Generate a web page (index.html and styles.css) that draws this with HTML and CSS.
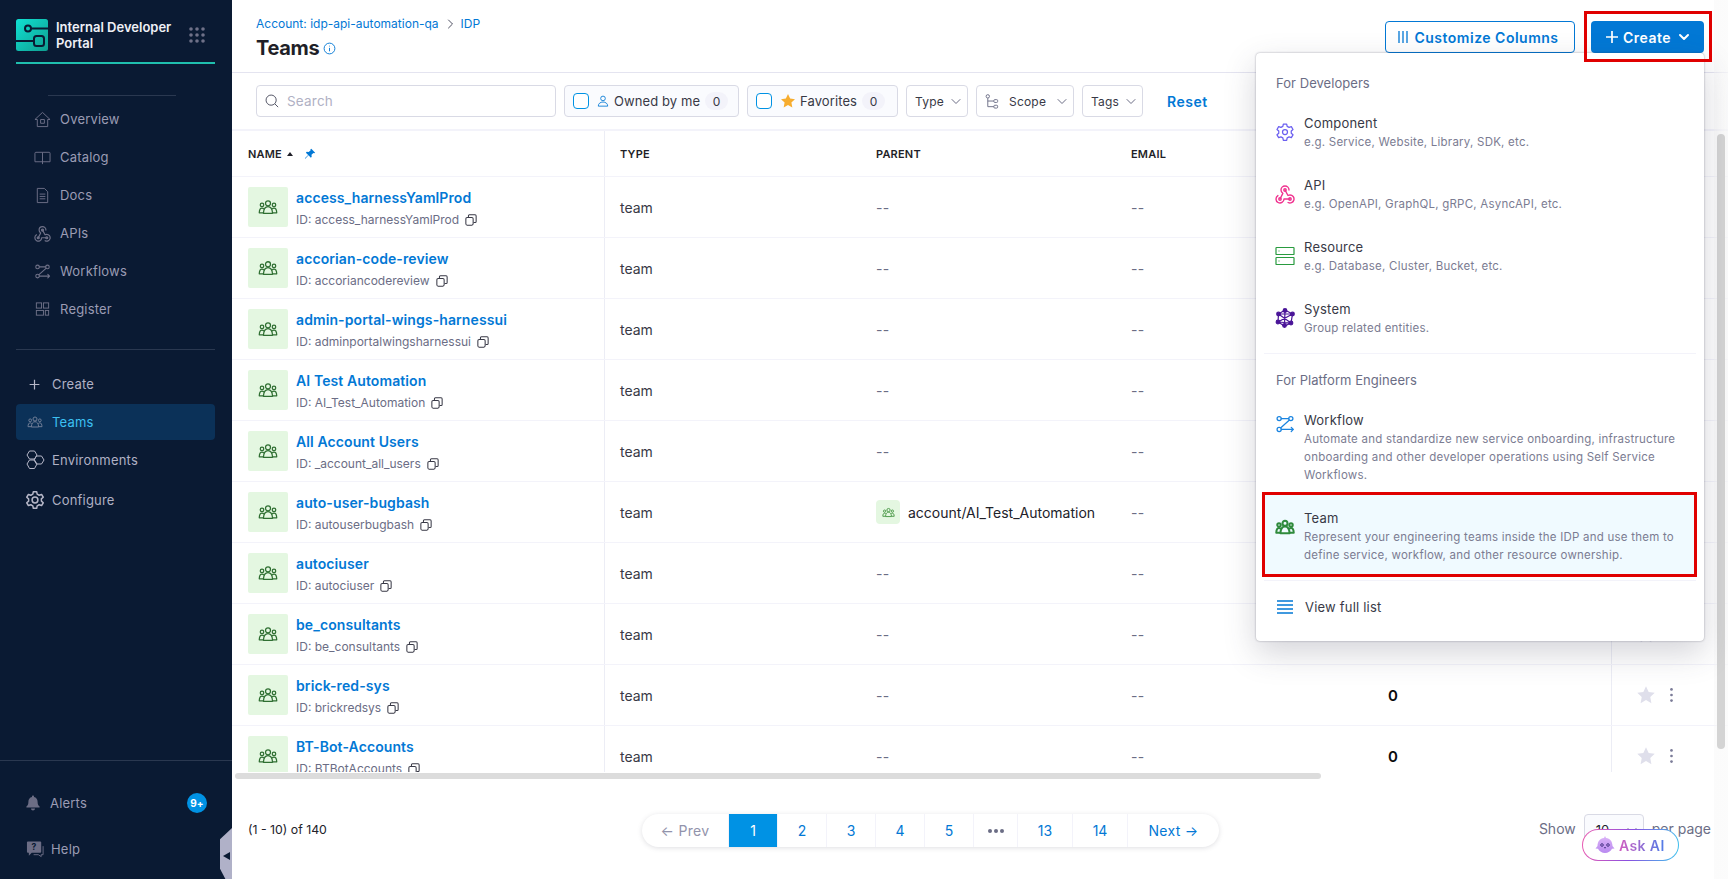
FILE: index.html
```html
<!DOCTYPE html>
<html lang="en">
<head>
<meta charset="utf-8">
<title>Teams</title>
<link rel="stylesheet" href="styles.css">
</head>
<body>
<svg class="defs" width="0" height="0" aria-hidden="true">
  <defs>
    <symbol id="team" viewBox="0 0 24 24" fill="none" stroke="currentColor" stroke-linejoin="round">
      <circle cx="12" cy="7.5" r="3"/>
      <path d="M6.5 19.5c.3-5 2.2-8 5.5-8s5.200 3 5.500 8z"/>
      <circle cx="4.800" cy="9.500" r="2.100"/>
      <circle cx="19.200" cy="9.500" r="2.100"/>
      <path d="M6.500 19H1.500c.1-3 1-5.800 3.300-5.800 1 0 1.800.5 2.300 1.300M17.500 19h5c-.1-3-1-5.800-3.300-5.800-1 0-1.800.5-2.300 1.300"/>
    </symbol>
    <symbol id="api" viewBox="2 2 20 20" fill="none" stroke="currentColor" stroke-width="1.400" stroke-linecap="round" stroke-linejoin="round">
      <path d="M4.876 13.610a4 4 0 1 0 6.124 3.390h6"/>
      <path d="M15.066 20.502a4 4 0 1 0 1.934-7.502c-.706 0-1.424.179-2 .5l-3-5.500"/>
      <path d="M16 8a4 4 0 1 0-8 0c0 1.420.74 2.660 1.850 3.370l-2.850 5.630"/>
      <circle cx="12" cy="8" r="1.200"/>
      <circle cx="7" cy="17" r="1.200"/>
      <circle cx="17" cy="17" r="1.200"/>
    </symbol>
    <symbol id="flow" viewBox="0 0 24 24" fill="none" stroke="currentColor" stroke-width="1.500" stroke-linecap="round" stroke-linejoin="round">
      <circle cx="5" cy="5.500" r="2.500"/>
      <circle cx="19" cy="5.500" r="2.500"/>
      <circle cx="5" cy="18.500" r="2.500"/>
      <path d="M7.500 5.500h9M17 7.500 7 16.500M7.500 18.500H22M19.500 16l2.500 2.500-2.500 2.500"/>
    </symbol>
    <symbol id="copy" viewBox="0 0 14 14" fill="none" stroke="currentColor" stroke-width="1.200" stroke-linejoin="round">
      <rect x="1" y="4" width="8.500" height="9" rx="1.500"/>
      <path d="M4 3.500V2.300C4 1.600 4.500 1 5.200 1h6.600c.7 0 1.200.6 1.200 1.300v6.500c0 .7-.5 1.200-1.200 1.200H10"/>
    </symbol>
    <symbol id="chev" viewBox="0 0 12 12" fill="none" stroke="currentColor" stroke-width="1" stroke-linecap="round" stroke-linejoin="round">
      <path d="M2 4.500 6 8.500l4-4"/>
    </symbol>
    <symbol id="star" viewBox="0 0 24 24" fill="currentColor">
      <path d="M12 1.500l3.200 6.900 7.300.9-5.400 5.100 1.400 7.500L12 18l-6.500 3.900 1.400-7.500L1.500 9.300l7.300-.9z"/>
    </symbol>
    <symbol id="dots" viewBox="0 0 6 20" fill="currentColor">
      <circle cx="3" cy="3" r="1.700"/><circle cx="3" cy="10" r="1.700"/><circle cx="3" cy="17" r="1.700"/>
    </symbol>
  </defs>
</svg>

<div class="app">
  <aside class="sidebar">
    <div class="brand">
      <svg class="logo" viewBox="0 0 32 32" aria-hidden="true">
        <defs>
          <linearGradient id="logoGrad" x1="0" y1="0" x2="1" y2="1">
            <stop offset="0" stop-color="#10e0d2"/>
            <stop offset="1" stop-color="#0f9e90"/>
          </linearGradient>
        </defs>
        <rect width="32" height="32" rx="2.500" fill="url(#logoGrad)"/>
        <g fill="none" stroke="#0a1a33" stroke-width="2">
          <circle cx="12" cy="9.500" r="3"/>
          <path d="M15 9.500h17M0 22h18"/>
          <rect x="18" y="17" width="10" height="10" rx="2.500"/>
        </g>
      </svg>
      <div class="brand-name">Internal Developer Portal</div>
      <svg class="apps" viewBox="0 0 16 16" aria-hidden="true">
        <g fill="#6f7188">
          <circle cx="2" cy="2" r="1.800"/><circle cx="8" cy="2" r="1.800"/><circle cx="14" cy="2" r="1.800"/>
          <circle cx="2" cy="8" r="1.800"/><circle cx="8" cy="8" r="1.800"/><circle cx="14" cy="8" r="1.800"/>
          <circle cx="2" cy="14" r="1.800"/><circle cx="8" cy="14" r="1.800"/><circle cx="14" cy="14" r="1.800"/>
        </g>
      </svg>
    </div>
    <div class="brand-line"></div>
    <div class="short-rule"></div>
    <nav class="nav-main">
      <a class="nav-item"><svg class="nav-ic" viewBox="0 0 18 18" fill="none" stroke="currentColor" stroke-linejoin="round"><path d="M1 9 9 1.500 17 9h-2.500v7.500h-11V9z"/><rect x="7" y="9" width="4" height="4"/></svg>Overview</a>
      <a class="nav-item"><svg class="nav-ic" viewBox="0 0 18 18" fill="none" stroke="currentColor" stroke-linejoin="round"><path d="M9 3.500H2a1 1 0 0 0-1 1v9h8M9 3.500h7a1 1 0 0 1 1 1v9H9M9 3.500V16"/></svg>Catalog</a>
      <a class="nav-item"><svg class="nav-ic" viewBox="0 0 18 18" fill="none" stroke="currentColor" stroke-linejoin="round"><path d="M3.500 1.500H11L14.500 5v11.500h-11zM6 7.500h6M6 10h6M6 12.500h6"/></svg>Docs</a>
      <a class="nav-item"><svg class="nav-ic"><use href="#api"/></svg>APIs</a>
      <a class="nav-item"><svg class="nav-ic"><use href="#flow"/></svg>Workflows</a>
      <a class="nav-item"><svg class="nav-ic" viewBox="0 0 18 18" fill="none" stroke="currentColor"><rect x="2.500" y="2" width="5.500" height="5.500"/><rect x="10" y="2" width="5.500" height="5.500"/><rect x="2.500" y="10" width="7.500" height="5"/><rect x="12" y="10" width="3.500" height="5"/></svg>Register</a>
    </nav>
    <div class="wide-rule"></div>
    <nav class="nav-second">
      <a class="nav-item2"><svg class="nav-ic2" viewBox="0 0 16 16" fill="none" stroke="#b6b7c8" stroke-width="1.500"><path d="M8 2v12M2 8h12"/></svg>Create</a>
      <a class="nav-item2 active"><svg class="nav-ic2 team-ic"><use href="#team"/></svg>Teams</a>
      <a class="nav-item2"><svg class="nav-ic2 large" viewBox="0 0 20 20" fill="none" stroke="#b6b7c8" stroke-width="1"><path d="M4.500 1h5l2.500 4-2.500 4h-5L2 5zM11.500 6h5L19 10l-2.500 4h-5L9 10zM4.500 10h5l2.500 4-2.500 4.500h-5L2 14z"/></svg>Environments</a>
      <a class="nav-item2 configure"><svg class="nav-ic2 large" viewBox="0 0 24 24" fill="none" stroke="#b6b7c8" stroke-width="1.800" stroke-linejoin="round"><circle cx="12" cy="12" r="3.500"/><path d="M10 2h4l.6 3 2.400 1.300 2.900-1 2 3.400-2.300 2 .1 2.600 2.200 2-2 3.400-2.900-1-2.400 1.300-.6 3h-4l-.6-3-2.400-1.300-2.900 1-2-3.400 2.300-2-.1-2.600-2.200-2 2-3.400 2.900 1L9.400 5z"/></svg>Configure</a>
    </nav>
    <div class="side-foot">
      <a class="foot-item alerts"><svg class="foot-ic" viewBox="0 0 16 16" fill="#6c6d85"><path d="M8 0.500c.6 0 1 .4 1 1v.6c2.300.5 3.600 2.300 3.600 4.700 0 2.800.7 3.800 2 4.800v.9H1.400v-.9c1.300-1 2-2 2-4.800C3.400 4.400 4.700 2.600 7 2.100v-.6c0-.6.400-1 1-1zM6 13.500h4c0 1.200-.9 2-2 2s-2-.8-2-2z"/></svg>Alerts<span class="badge">9+</span></a>
      <a class="foot-item help"><svg class="foot-ic wide" viewBox="0 0 20 18" fill="none"><path d="M2 1h13a1 1 0 0 1 1 1v10a1 1 0 0 1-1 1H6l-3 3v-3H2a1 1 0 0 1-1-1V2a1 1 0 0 1 1-1z" fill="#6c6d85"/><path d="M18 6v9h-2v2l-3-2H8" stroke="#6c6d85"/><text x="8.500" y="10.500" class="q">?</text></svg>Help</a>
    </div>
    <div class="collapse"><span class="collapse-arrow"></span></div>
  </aside>

  <main class="main">
    <header class="topbar">
      <div class="heading">
        <div class="crumbs"><a>Account: idp-api-automation-qa</a><svg class="crumb-sep" viewBox="0 0 12 12"><use href="#chev"/></svg><a>IDP</a></div>
        <h1 class="title">Teams<svg class="info" viewBox="0 0 14 14" fill="none" stroke="currentColor"><circle cx="7" cy="7" r="5.800"/><path d="M7 6.300V10M7 4v.8"/></svg></h1>
      </div>
      <div class="top-actions">
        <button class="btn-outline"><svg class="cols" viewBox="0 0 12 14" stroke="currentColor" stroke-width="1.300"><path d="M2 1v12M6 1v12M10 1v12"/></svg>Customize Columns</button>
        <button class="btn-primary"><svg class="plus" viewBox="0 0 14 14" stroke="currentColor" stroke-width="1.700"><path d="M7 1v12M1 7h12"/></svg>Create<svg class="caret" viewBox="0 0 12 12" fill="none" stroke="currentColor" stroke-width="2" stroke-linecap="round" stroke-linejoin="round"><path d="M2 4 6 8l4-4"/></svg></button>
      </div>
    </header>

    <section class="filters">
      <div class="search">
        <svg class="search-ic" viewBox="0 0 16 16" fill="none" stroke="#4f5162" stroke-width="1.100"><circle cx="7" cy="7" r="5.800"/><path d="m11.300 11.300 3.700 3.700"/></svg>
        <span>Search</span>
      </div>
      <label class="chip owned"><span class="check"></span><svg class="person" viewBox="0 0 14 14" fill="none" stroke="#0278d5"><circle cx="7" cy="4" r="2.700"/><path d="M1.500 13c0-3 2.400-4.800 5.500-4.800s5.500 1.800 5.500 4.800z"/></svg>Owned by me<span class="count">0</span></label>
      <label class="chip fav"><span class="check"></span><svg class="fav-star"><use href="#star"/></svg>Favorites<span class="count">0</span></label>
      <div class="select s-type">Type<svg class="sel-chev" viewBox="0 0 12 12"><use href="#chev"/></svg></div>
      <div class="select s-scope"><svg class="scope-ic" viewBox="0 0 14 16" fill="none" stroke="#6b6d85"><circle cx="2.500" cy="2.500" r="1.800"/><rect x="9" y="6" width="4" height="3" rx="1"/><rect x="9" y="12" width="4" height="3" rx="1"/><path d="M2.500 4.500V13.500H9M2.500 7.500H9"/></svg>Scope<svg class="sel-chev" viewBox="0 0 12 12"><use href="#chev"/></svg></div>
      <div class="select s-tags">Tags<svg class="sel-chev" viewBox="0 0 12 12"><use href="#chev"/></svg></div>
      <a class="reset">Reset</a>
    </section>

    <section class="table">
      <div class="thead">
        <div class="th name-col">NAME <span class="sort"></span><svg class="pin" viewBox="0 0 14 14" fill="currentColor"><path d="M8.500 1l4.500 4.500-1 .5-1-.3-2.300 2.300.3 2.300-1 1L5.300 8.600 1.500 12.500l-.5-.5 3.900-3.800L2.200 5.500l1-1 2.300.3L7.800 2.500l-.3-1z"/></svg></div>
        <div class="th">TYPE</div>
        <div class="th">PARENT</div>
        <div class="th">EMAIL</div>
        <div class="th"></div>
        <div class="th act-col"></div>
      </div>

      <div class="row">
        <div class="td name-col"><span class="avatar"><svg><use href="#team"/></svg></span><div><a class="nm">access_harnessYamlProd</a><div class="id">ID: access_harnessYamlProd<svg><use href="#copy"/></svg></div></div></div>
        <div class="td">team</div><div class="td dash">--</div><div class="td dash">--</div><div class="td num">0</div>
        <div class="td act-col"><svg class="fv"><use href="#star"/></svg><svg class="more"><use href="#dots"/></svg></div>
      </div>
      <div class="row">
        <div class="td name-col"><span class="avatar"><svg><use href="#team"/></svg></span><div><a class="nm">accorian-code-review</a><div class="id">ID: accoriancodereview<svg><use href="#copy"/></svg></div></div></div>
        <div class="td">team</div><div class="td dash">--</div><div class="td dash">--</div><div class="td num">0</div>
        <div class="td act-col"><svg class="fv"><use href="#star"/></svg><svg class="more"><use href="#dots"/></svg></div>
      </div>
      <div class="row">
        <div class="td name-col"><span class="avatar"><svg><use href="#team"/></svg></span><div><a class="nm">admin-portal-wings-harnessui</a><div class="id">ID: adminportalwingsharnessui<svg><use href="#copy"/></svg></div></div></div>
        <div class="td">team</div><div class="td dash">--</div><div class="td dash">--</div><div class="td num">0</div>
        <div class="td act-col"><svg class="fv"><use href="#star"/></svg><svg class="more"><use href="#dots"/></svg></div>
      </div>
      <div class="row">
        <div class="td name-col"><span class="avatar"><svg><use href="#team"/></svg></span><div><a class="nm">AI Test Automation</a><div class="id">ID: AI_Test_Automation<svg><use href="#copy"/></svg></div></div></div>
        <div class="td">team</div><div class="td dash">--</div><div class="td dash">--</div><div class="td num">0</div>
        <div class="td act-col"><svg class="fv"><use href="#star"/></svg><svg class="more"><use href="#dots"/></svg></div>
      </div>
      <div class="row">
        <div class="td name-col"><span class="avatar"><svg><use href="#team"/></svg></span><div><a class="nm">All Account Users</a><div class="id">ID: _account_all_users<svg><use href="#copy"/></svg></div></div></div>
        <div class="td">team</div><div class="td dash">--</div><div class="td dash">--</div><div class="td num">0</div>
        <div class="td act-col"><svg class="fv"><use href="#star"/></svg><svg class="more"><use href="#dots"/></svg></div>
      </div>
      <div class="row">
        <div class="td name-col"><span class="avatar"><svg><use href="#team"/></svg></span><div><a class="nm">auto-user-bugbash</a><div class="id">ID: autouserbugbash<svg><use href="#copy"/></svg></div></div></div>
        <div class="td">team</div><div class="td parent"><span class="mini"><svg><use href="#team"/></svg></span>account/AI_Test_Automation</div><div class="td dash">--</div><div class="td num">0</div>
        <div class="td act-col"><svg class="fv"><use href="#star"/></svg><svg class="more"><use href="#dots"/></svg></div>
      </div>
      <div class="row">
        <div class="td name-col"><span class="avatar"><svg><use href="#team"/></svg></span><div><a class="nm">autociuser</a><div class="id">ID: autociuser<svg><use href="#copy"/></svg></div></div></div>
        <div class="td">team</div><div class="td dash">--</div><div class="td dash">--</div><div class="td num">0</div>
        <div class="td act-col"><svg class="fv"><use href="#star"/></svg><svg class="more"><use href="#dots"/></svg></div>
      </div>
      <div class="row">
        <div class="td name-col"><span class="avatar"><svg><use href="#team"/></svg></span><div><a class="nm">be_consultants</a><div class="id">ID: be_consultants<svg><use href="#copy"/></svg></div></div></div>
        <div class="td">team</div><div class="td dash">--</div><div class="td dash">--</div><div class="td num">0</div>
        <div class="td act-col"><svg class="fv"><use href="#star"/></svg><svg class="more"><use href="#dots"/></svg></div>
      </div>
      <div class="row">
        <div class="td name-col"><span class="avatar"><svg><use href="#team"/></svg></span><div><a class="nm">brick-red-sys</a><div class="id">ID: brickredsys<svg><use href="#copy"/></svg></div></div></div>
        <div class="td">team</div><div class="td dash">--</div><div class="td dash">--</div><div class="td num">0</div>
        <div class="td act-col"><svg class="fv"><use href="#star"/></svg><svg class="more"><use href="#dots"/></svg></div>
      </div>
      <div class="row">
        <div class="td name-col"><span class="avatar"><svg><use href="#team"/></svg></span><div><a class="nm">BT-Bot-Accounts</a><div class="id">ID: BTBotAccounts<svg><use href="#copy"/></svg></div></div></div>
        <div class="td">team</div><div class="td dash">--</div><div class="td dash">--</div><div class="td num">0</div>
        <div class="td act-col"><svg class="fv"><use href="#star"/></svg><svg class="more"><use href="#dots"/></svg></div>
      </div>
    </section>

    <footer class="foot">
      <div class="range">(1 - 10) of 140</div>
      <div class="pager">
        <a class="pg prev">← Prev</a>
        <a class="pg on">1</a>
        <a class="pg">2</a>
        <a class="pg">3</a>
        <a class="pg">4</a>
        <a class="pg">5</a>
        <a class="pg gap"><i></i><i></i><i></i></a>
        <a class="pg two">13</a>
        <a class="pg two">14</a>
        <a class="pg next">Next →</a>
      </div>
      <div class="per">Show<span class="per-box">10<svg class="sel-chev" viewBox="0 0 12 12"><use href="#chev"/></svg></span>per page</div>
    </footer>

    <div class="hbar"></div>
    <div class="vtrack"><div class="vthumb"></div></div>

    <div class="menu">
      <div class="menu-head">For Developers</div>
      <div class="mi">
        <svg class="mi-ic violet" viewBox="0 0 24 24" fill="none" stroke="currentColor" stroke-width="1.500" stroke-linejoin="round"><circle cx="12" cy="12" r="3"/><path d="M10 2.500h4l.6 2.800 2.300 1.200 2.700-.9 2 3.400-2.100 1.900v2.600l2.100 1.900-2 3.400-2.700-.9-2.300 1.200-.6 2.800h-4l-.6-2.800-2.300-1.200-2.700.9-2-3.400 2.100-1.900v-2.600L2.400 9l2-3.400 2.700.9 2.300-1.200z"/></svg>
        <div><div class="mi-t">Component</div><div class="mi-d">e.g. Service, Website, Library, SDK, etc.</div></div>
      </div>
      <div class="mi">
        <svg class="mi-ic pink"><use href="#api"/></svg>
        <div><div class="mi-t">API</div><div class="mi-d">e.g. OpenAPI, GraphQL, gRPC, AsyncAPI, etc.</div></div>
      </div>
      <div class="mi">
        <svg class="mi-ic green" viewBox="0 0 20 20" fill="none" stroke="currentColor" stroke-width="1.200"><rect x="1" y="1.500" width="18" height="7" rx=".6"/><rect x="1" y="11.500" width="18" height="7" rx=".6"/><path d="M3.500 5h1M3.500 15h1"/></svg>
        <div><div class="mi-t">Resource</div><div class="mi-d">e.g. Database, Cluster, Bucket, etc.</div></div>
      </div>
      <div class="mi last">
        <svg class="mi-ic purple" viewBox="0 0 20 20" fill="none" stroke="currentColor" stroke-width="1.200"><path d="M10 2 17.500 6 16 15 9.500 18 3 14 3.500 6zM3.500 6 16 15M17.500 6 3 14M10 2 9.500 18M3.500 6 17.500 6M3 14 16 15"/><g fill="currentColor"><circle cx="10" cy="2.500" r="1.800"/><circle cx="17.500" cy="6" r="1.800"/><circle cx="16" cy="15" r="1.800"/><circle cx="9.500" cy="17.500" r="1.800"/><circle cx="3" cy="14" r="1.800"/><circle cx="3.500" cy="6" r="1.800"/></g></svg>
        <div><div class="mi-t">System</div><div class="mi-d">Group related entities.</div></div>
      </div>
      <div class="menu-rule"></div>
      <div class="menu-head second">For Platform Engineers</div>
      <div class="mi wf">
        <svg class="mi-ic blue"><use href="#flow"/></svg>
        <div><div class="mi-t">Workflow</div><div class="mi-d">Automate and standardize new service onboarding, infrastructure onboarding and other developer operations using Self Service Workflows.</div></div>
      </div>
      <div class="mi team-item">
        <svg class="mi-ic tgreen"><use href="#team"/></svg>
        <div><div class="mi-t">Team</div><div class="mi-d">Represent your engineering teams inside the IDP and use them to define service, workflow, and other resource ownership.</div></div>
      </div>
      <div class="menu-rule low"></div>
      <div class="mi-full"><svg class="list-ic" viewBox="0 0 16 14" stroke="currentColor" stroke-width="1.400"><path d="M0 1h16M0 5h16M0 9h16M0 13h16"/></svg>View full list</div>
    </div>

    <div class="mark mark-create"></div>
    <div class="mark mark-team"></div>

    <div class="ask">
      <svg class="ask-ic" viewBox="0 0 20 20"><defs><linearGradient id="birdGrad" x1="0" y1="0" x2="0" y2="1"><stop offset="0" stop-color="#dcb3f7"/><stop offset="1" stop-color="#b98af0"/></linearGradient></defs><path d="M10 1l1 2c4 .4 6.500 3.500 6.500 8l2 2.500-2.500.300c-1.200 2.700-4 4.200-7 4.200s-5.800-1.500-7-4.200L.500 13.500l2-2.500c0-4.500 2.500-7.600 6.500-8z" fill="url(#birdGrad)"/><g fill="none" stroke="#3d2a7d" stroke-width=".9"><circle cx="7" cy="10" r="1.300"/><circle cx="13" cy="10" r="1.300"/><path d="M9 12.500q1 .9 2 0"/></g></svg>
      <span class="ask-t">Ask AI</span>
    </div>
  </main>
</div>
</body>
</html>
```
FILE: styles.css
```css
* { box-sizing: border-box; }
html, body { margin: 0; height: 100%; overflow: hidden; }
body { font-family: Inter, "Noto Sans", "Liberation Sans", sans-serif; background: #fff; color: #22222a; font-size: 13px; }
a { color: inherit; text-decoration: none; }
button { font-family: inherit; cursor: pointer; }
.defs { position: absolute; }
svg { display: block; flex: none; }

.app { display: flex; height: 879px; width: 1728px; }

/* sidebar */
.sidebar { width: 232px; flex: none; height: 100%; background: #0a1a33; display: flex; flex-direction: column; position: relative; color: #9b9cb3; }
.brand { display: flex; align-items: center; padding: 19px 0 0 16px; height: 51px; }
.logo { width: 32px; height: 32px; }
.brand-name { width: 122px; margin-left: 8px; color: #eff0f6; font-size: 13px; font-weight: 600; line-height: 16px; }
.apps { width: 16px; height: 16px; margin-left: 11px; }
.brand-line { height: 2px; background: #1fbfae; margin: 11px 17px 0 16px; }
.short-rule { height: 1px; background: #2a3850; margin: 31px 56px 0 48px; }
.nav-main { padding-top: 4px; }
.nav-item { display: flex; align-items: center; height: 38px; padding-left: 34px; font-size: 13px; letter-spacing: .2px; color: #9b9cb3; }
.nav-ic { width: 17px; height: 17px; margin-right: 9px; color: #6f7188; }
.wide-rule { height: 1px; background: #2a3850; margin: 21px 17px 0 16px; }
.nav-second { padding-top: 15px; }
.nav-item2 { display: flex; align-items: center; height: 38px; padding-left: 36px; font-size: 13px; letter-spacing: .2px; color: #b0b1c4; position: relative; }
.nav-ic2 { width: 13px; height: 13px; margin-right: 11px; margin-left: -8px; }
.nav-ic2.large { width: 20px; height: 20px; margin-left: -11px; margin-right: 7px; }
.nav-ic2.team-ic { width: 16px; height: 16px; margin-left: -9px; margin-right: 9px; color: #6f7d96; stroke-width: 1.500; }
.nav-item2.active { color: #3cc0f2; height: 36px; margin: 1px 17px 1px 16px; padding-left: 20px; background: #0b3158; border-radius: 4px; }
.configure { margin-top: 2px; }
.side-foot { margin-top: auto; border-top: 1px solid #2a3850; padding: 23px 0 11px; display: flex; flex-direction: column; gap: 8px; }
.foot-item { display: flex; align-items: center; height: 38px; padding-left: 25px; font-size: 13px; letter-spacing: .2px; color: #9b9cb3; }
.foot-ic { width: 16px; height: 16px; margin-right: 9px; }
.foot-ic.wide { width: 19px; height: 18px; margin-left: 1px; margin-right: 6px; }
.q { font: 700 9px Inter, sans-serif; fill: #0a1a33; text-anchor: middle; }
.badge { margin-left: auto; margin-right: 25px; width: 20px; height: 20px; border-radius: 50%; background: #0092e4; color: #fff; font-size: 10px; font-weight: 700; display: flex; align-items: center; justify-content: center; }
.collapse { position: absolute; right: 0; bottom: 0; width: 12px; height: 51px; background: #b0b1c8; clip-path: polygon(100% 0, 100% 100%, 45% 100%, 0 80%, 0 22%); display: flex; align-items: center; justify-content: center; }
.collapse-arrow { width: 0; height: 0; border-style: solid; border-width: 4px 7px 4px 0; border-color: transparent #0a1a33 transparent transparent; margin-top: 4px; }

/* main */
.main { flex: 1; min-width: 0; height: 100%; display: flex; flex-direction: column; position: relative; overflow: hidden; }
.topbar { height: 73px; flex: none; border-bottom: 1px solid #e4e4f0; display: flex; justify-content: space-between; padding: 0 24px 0 24px; }
.crumbs { display: flex; align-items: center; padding-top: 16px; font-size: 12px; line-height: 16px; color: #0278d5; }
.crumb-sep { width: 12px; height: 12px; margin: 0 5px; color: #4f5162; transform: rotate(-90deg); }
.title { margin: 2px 0 0; display: flex; align-items: center; font-size: 20px; line-height: 28px; font-weight: 700; letter-spacing: -.3px; color: #1f1f28; }
.info { width: 13px; height: 13px; margin-left: 4px; color: #0278d5; }
.top-actions { display: flex; gap: 16px; padding-top: 21px; }
.btn-outline { height: 32px; width: 190px; border: 1px solid #0278d5; border-radius: 4px; background: #fff; color: #0278d5; font-size: 14px; font-weight: 600; letter-spacing: .5px; display: flex; align-items: center; justify-content: center; gap: 5px; padding: 0 4px 0 0; }
.cols { width: 12px; height: 14px; }
.btn-primary { height: 32px; width: 113px; border: 0; border-radius: 4px; background: #0278d5; color: #fff; font-size: 14px; font-weight: 600; letter-spacing: .45px; display: flex; align-items: center; justify-content: center; padding: 0; }
.plus { width: 14px; height: 14px; margin-right: 4px; }
.caret { width: 12px; height: 12px; margin-left: 7px; }

/* filters */
.filters { height: 58px; flex: none; display: flex; align-items: center; padding-left: 24px; border-bottom: 2px solid #f3f3fa; }
.search { width: 300px; height: 32px; border: 1px solid #d9dae5; border-radius: 4px; display: flex; align-items: center; padding-left: 8px; color: #b0b1c4; font-size: 13.500px; letter-spacing: .2px; margin-right: 8px; }
.search-ic { width: 14px; height: 14px; margin-right: 8px; }
.chip { height: 32px; border: 1px solid #d9dae5; border-radius: 4px; background: #fafbfe; display: flex; align-items: center; padding-left: 8px; margin-right: 8px; font-size: 13px; letter-spacing: .1px; color: #383946; }
.check { width: 16px; height: 16px; border: 1px solid #0092e4; border-radius: 4px; background: #fff; margin-right: 8px; }
.owned { width: 175px; margin-right: 8px; }
.fav { width: 151px; }
.person { width: 12px; height: 12px; margin-right: 5px; }
.fav-star { width: 16px; height: 16px; margin-right: 4px; color: #f7ad2f; }
.count { min-width: 23px; height: 18px; border-radius: 9px; background: #f3f3fa; display: inline-flex; align-items: center; justify-content: center; font-size: 12px; margin-left: 5px; }
.select { height: 32px; border: 1px solid #d9dae5; border-radius: 4px; display: flex; align-items: center; padding-left: 8px; margin-right: 8px; font-size: 12px; letter-spacing: .2px; color: #383946; background: #fff; }
.s-type { width: 62px; }
.s-scope { width: 98px; }
.s-tags { width: 61px; }
.sel-chev { width: 12px; height: 12px; margin-left: auto; margin-right: 5px; color: #6b6d85; }
.scope-ic { width: 14px; height: 15px; margin-right: 10px; }
.reset { color: #0278d5; font-size: 14px; font-weight: 600; letter-spacing: .5px; margin-left: 16px; }

/* table */
.table { flex: none; height: 641px; overflow: hidden; }
.thead, .row { display: grid; grid-template-columns: 373px 256px 255px 255px 240px 103px; }
.thead { height: 46px; border-bottom: 1px solid #f3f3fa; }
.row { height: 61px; border-bottom: 1px solid #f3f3fa; }
.th { display: flex; align-items: center; padding: 1px 0 0 15px; font-size: 11px; font-weight: 600; letter-spacing: .2px; color: #1f1f28; }
.td { display: flex; align-items: center; padding-left: 15px; font-size: 14px; color: #383946; }
.th.name-col, .td.name-col { border-right: 1px solid #ecedf5; padding-left: 16px; }
.sort { width: 0; height: 0; border-style: solid; border-width: 0 3px 4px; border-color: transparent transparent #1f1f28; margin-left: 5px; }
.pin { width: 12px; height: 12px; margin-left: 11px; color: #0278d5; }
.avatar { width: 40px; height: 40px; border-radius: 2px; background: #e4f7e1; color: #2f6f32; display: flex; align-items: center; justify-content: center; margin-right: 8px; }
.avatar svg { width: 20px; height: 20px; stroke-width: 1.500; }
.nm { display: block; color: #0278d5; font-size: 14px; line-height: 20px; font-weight: 600; margin-top: 2px; letter-spacing: .1px; }
.id { display: flex; align-items: center; color: #6b6d85; font-size: 12px; line-height: 16px; margin-top: 4px; }
.id svg { width: 12px; height: 12px; margin-left: 6px; color: #383946; }
.dash { color: #6b6d85; letter-spacing: .3px; }
.num { font-weight: 600; font-size: 15px; color: #0b0b0d; padding-left: 17px; }
.parent { gap: 8px; color: #22222a; }
.mini { width: 24px; height: 24px; border-radius: 4px; background: #e4f7e1; color: #4d9a4a; display: flex; align-items: center; justify-content: center; }
.mini svg { width: 13px; height: 13px; stroke-width: 1.800; }
.act-col { border-left: 1px solid #ecedf5; padding-left: 24px; gap: 13px; }
.fv { width: 20px; height: 20px; color: #dfdfeb; }
.more { width: 5px; height: 16px; color: #7b7c98; }

/* footer */
.foot { flex: 1; display: flex; align-items: flex-start; padding: 42px 17px 0 16px; }
.range { width: 394px; line-height: 32px; font-size: 12.300px; color: #22222a; }
.pager { display: flex; height: 33px; border-radius: 17px; background: #fff; box-shadow: 0 1px 5px rgba(96, 97, 112, .2); overflow: hidden; }
.pg { width: 49px; display: flex; align-items: center; justify-content: center; font-size: 14px; color: #0278d5; border-left: 1px solid #f3f3fa; }
.pg.prev { width: 86px; color: #9293ab; border-left: 0; letter-spacing: .3px; }
.pg.on { background: #0092e4; color: #fff; }
.pg.gap { width: 44px; gap: 2px; color: #6b6d85; }
.pg.gap i { width: 4px; height: 4px; border-radius: 50%; background: #6b6d85; }
.pg.two { width: 55px; }
.pg.next { width: 92px; letter-spacing: .3px; }
.per { margin-left: auto; display: flex; align-items: flex-start; line-height: 30px; font-size: 14px; color: #6b6d85; }
.per-box { width: 60px; height: 32px; border: 1px solid #d9dae5; border-radius: 4px; margin: 0 8px; padding-left: 11px; display: flex; align-items: center; color: #22222a; font-size: 13px; background: #fafbfe; }

/* overlays */
.hbar { position: absolute; left: 3px; top: 773px; width: 1086px; height: 6px; background: #dcdcdc; border-radius: 3px; }
.vtrack { position: absolute; right: 0; top: 0; bottom: 0; width: 14px; background: linear-gradient(90deg, rgba(245,245,245,.4), rgba(250,250,250,.7)); }
.vthumb { position: absolute; left: 3px; top: 134px; width: 8px; height: 615px; background: #d4d4d4; border-radius: 4px; }

.menu { position: absolute; left: 1024px; top: 53px; width: 448px; height: 588px; background: #fff; border-radius: 4px; box-shadow: 0 0 2px rgba(40,41,61,.45), 0 12px 32px rgba(60,60,80,.22); padding-top: 21px; }
.menu-head { font-size: 13px; line-height: 18px; padding-left: 20px; color: #6b6d85; letter-spacing: .05px; }
.mi { display: flex; gap: 9px; padding: 0 19px; height: 62px; align-items: flex-start; }
.menu-head + .mi { margin-top: 22px; }
.mi-t { font-size: 13px; line-height: 18px; color: #383946; letter-spacing: .2px; }
.mi-d { font-size: 11.500px; line-height: 18px; color: #7b7c92; margin-top: 1px; letter-spacing: .23px; }
.mi-ic { width: 20px; height: 20px; margin-top: 8px; }
.violet { color: #6b5ff0; }
.pink { color: #f0328f; }
.green { color: #299b3f; }
.purple { color: #4a1598; }
.blue { color: #1a84e0; }
.tgreen { color: #2f8a3c; stroke-width: 2.400; }
.mi.last { height: 53px; }
.menu-rule { height: 1px; margin: 0 8px; background: #f3f3fa; }
.menu-head.second { margin-top: 17px; }
.menu-head + .mi.wf { height: 81px; margin-top: 22px; }
.wf .mi-ic { margin-top: 3px; }
.team-item { height: 85px; margin: 0 8px; padding: 17px 11px 0; background: #f0faff; }
.team-item .mi-ic { margin-top: 8px; }
.menu-rule.low { margin-top: 3px; }
.mi-full { display: flex; align-items: center; gap: 12px; padding: 18px 21px 0; font-size: 13px; letter-spacing: .2px; color: #383946; }
.list-ic { width: 16px; height: 14px; color: #0278d5; }

.mark { position: absolute; border: 3px solid #e00000; pointer-events: none; }
.mark-create { left: 1352px; top: 11px; width: 128px; height: 51px; }
.mark-team { left: 1030px; top: 492px; width: 435px; height: 85px; }

.ask { position: absolute; left: 1350px; top: 829px; width: 97px; height: 32px; border-radius: 16px; border: 1.500px solid transparent; background: linear-gradient(#fff, #fff) padding-box, linear-gradient(100deg, #ef5db0, #8a4fe0 50%, #3fc7ee) border-box; display: flex; align-items: center; padding-left: 12px; gap: 4px; }
.ask-ic { width: 20px; height: 20px; }
.ask-t { font-size: 14px; font-weight: 600; letter-spacing: .4px; background: linear-gradient(90deg, #d25cc0, #4f7de8); -webkit-background-clip: text; background-clip: text; color: transparent; }
```
